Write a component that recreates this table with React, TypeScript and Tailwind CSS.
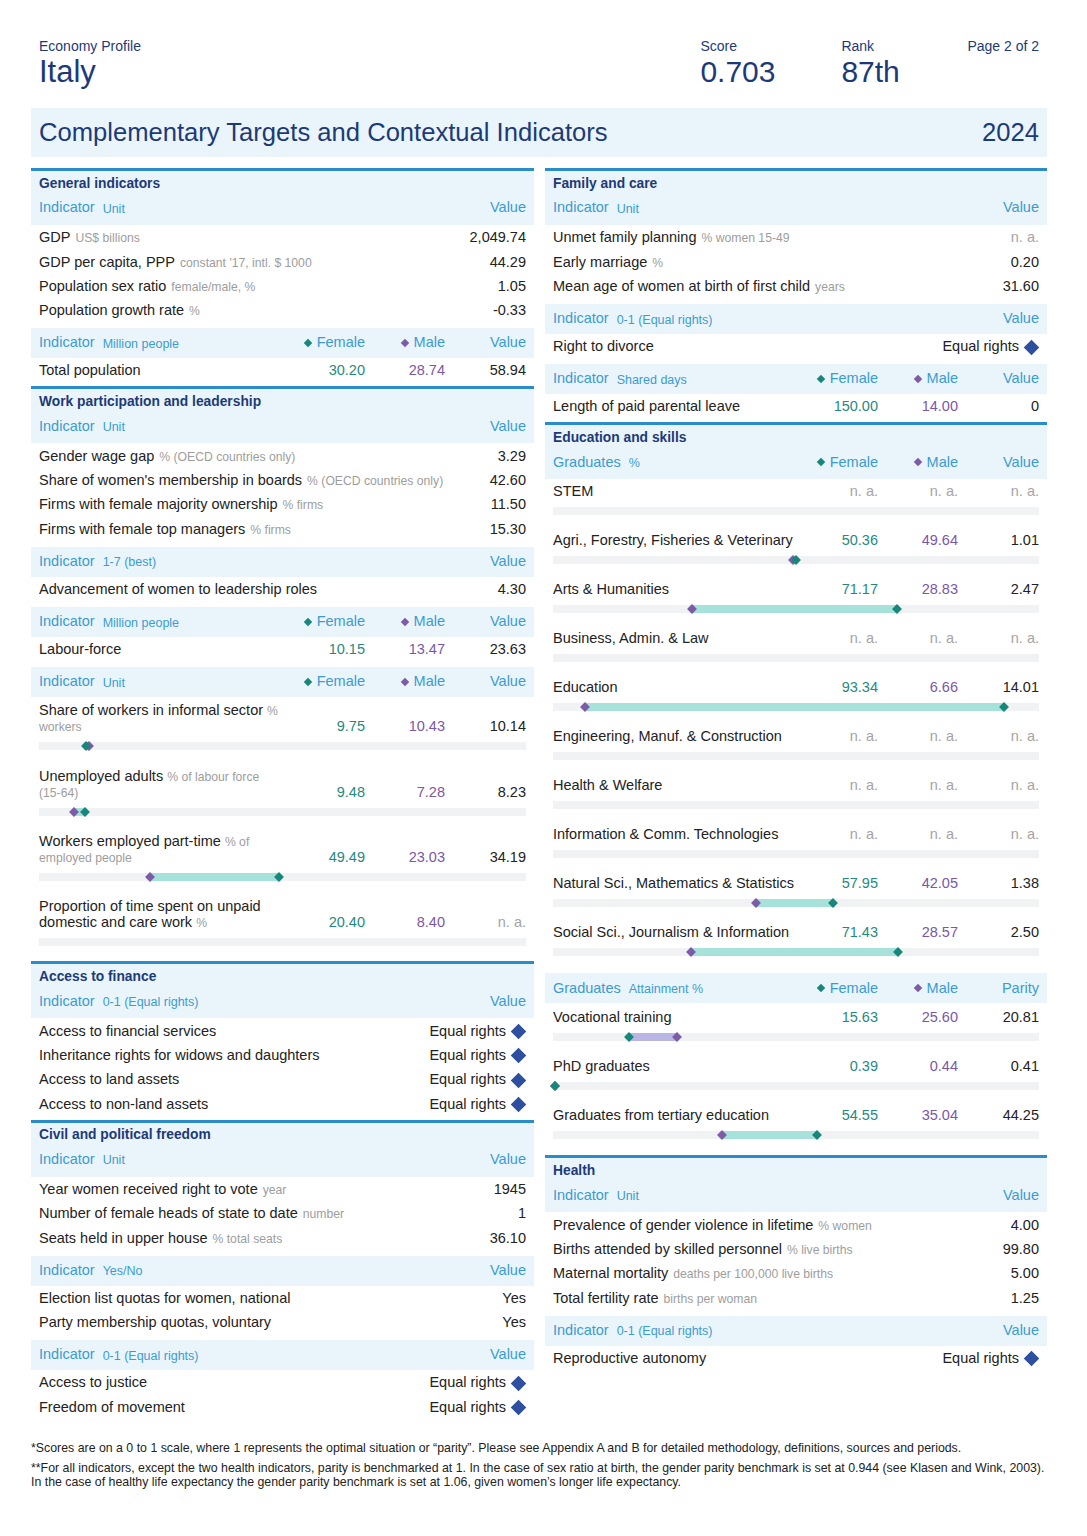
import React from 'react';

type Cols = 'v' | 'fmv';

type RowData = {
  label: string;
  unit?: string;
  value?: string;
  f?: string;
  m?: string;
  equal?: boolean;
};

type BarData = {
  label: React.ReactNode;
  f?: number;
  m?: number;
  fs?: string;
  ms?: string;
  vs?: string;
};

function HeadRow({ label = 'Indicator', unit, cols, last = 'Value' }: { label?: string; unit: string; cols: Cols; last?: string }) {
  return (
    <div className="flex h-[26px] items-center px-2 text-[14.5px] text-[#3b9bd3]">
      <span>{label}</span>
      <span className="ml-[8px] mt-[2px] text-[12.5px]">{unit}</span>
      <span className="flex-1" />
      {cols === 'fmv' && (
        <>
          <span className="flex w-[80px] items-center justify-end">
            <i className="mr-[6px] inline-block h-[6px] w-[6px] rotate-45 bg-[#17877b]" />
            Female
          </span>
          <span className="flex w-[80px] items-center justify-end">
            <i className="mr-[6px] inline-block h-[6px] w-[6px] rotate-45 bg-[#7d5ba6]" />
            Male
          </span>
        </>
      )}
      <span className="w-[81px] text-right">{last}</span>
    </div>
  );
}

function SubHead(props: { label?: string; unit: string; cols: Cols; last?: string }) {
  return (
    <div className="mt-[2px] bg-[#eaf5fb] py-[2px]">
      <HeadRow {...props} />
    </div>
  );
}

function Section({ title, unit, cols, label, children }: { title: string; unit: string; cols: Cols; label?: string; children: React.ReactNode }) {
  return (
    <div className="border-t-[3px] border-[#2b8ccb]">
      <div className="bg-[#eaf5fb] pb-[4px] pt-[2px]">
        <div className="flex h-[22px] items-center px-2 text-[13.8px] font-bold text-[#1d3a78]">{title}</div>
        <HeadRow label={label} unit={unit} cols={cols} />
      </div>
      {children}
    </div>
  );
}

function EqualRights() {
  return (
    <span className="flex items-center justify-end">
      Equal rights
      <i className="ml-[7px] mr-[2px] inline-block h-[11px] w-[11px] rotate-45 bg-[#2d4f9f]" />
    </span>
  );
}

function Val({ s, className }: { s?: string; className: string }) {
  if (s === 'n. a.') return <span className="text-[#a5a5a5]">n. a.</span>;
  return <span className={className}>{s}</span>;
}

function Rows({ rows }: { rows: RowData[] }) {
  return (
    <div className="pb-[3px] pt-[1px]">
      {rows.map((r) => (
        <div key={r.label} className="flex h-[24.3px] items-center px-2 text-[14.5px] text-[#222]">
          <span className="flex-1 truncate">
            {r.label}
            {r.unit && <span className="ml-[5px] text-[12.2px] leading-none text-[#9d9d9d]">{r.unit}</span>}
          </span>
          {r.f !== undefined && (
            <>
              <span className="w-[80px] text-right"><Val s={r.f} className="text-[#1f8a7f]" /></span>
              <span className="w-[80px] text-right"><Val s={r.m} className="text-[#7b57a8]" /></span>
            </>
          )}
          <span className={r.equal ? 'w-[150px] text-right' : 'w-[81px] text-right'}>
            {r.equal ? <EqualRights /> : <Val s={r.value} className="text-[#222]" />}
          </span>
        </div>
      ))}
    </div>
  );
}

function Bar({ f, m }: { f?: number; m?: number }) {
  const has = f !== undefined && m !== undefined;
  const k = 0.994;
  return (
    <div className="relative mt-[8px] h-[8px] bg-[#f1f2f4]">
      {has && (
        <>
          <div
            className={f! >= m! ? 'absolute top-0 h-full bg-[#a7e2da]' : 'absolute top-0 h-full bg-[#b9b6e3]'}
            style={{ left: `${Math.min(f!, m!) * k}%`, width: `${Math.abs(f! - m!) * k}%` }}
          />
          <i
            className="absolute top-1/2 h-[7px] w-[7px] -translate-x-1/2 -translate-y-1/2 rotate-45 bg-[#7d5ba6]"
            style={{ left: `${m! * k}%` }}
          />
          <i
            className="absolute top-1/2 h-[7px] w-[7px] -translate-x-1/2 -translate-y-1/2 rotate-45 bg-[#17877b]"
            style={{ left: `${f! * k}%` }}
          />
        </>
      )}
    </div>
  );
}

function BarItems({ items, wrap, item }: { items: BarData[]; wrap: string; item: string }) {
  return (
    <div className={wrap}>
      {items.map((it, i) => (
        <div key={i} className={item}>
          <div className="flex items-end text-[14.5px] leading-[16px] text-[#222]">
            <span className="flex-1">{it.label}</span>
            <span className="w-[80px] text-right"><Val s={it.fs ?? 'n. a.'} className="text-[#1f8a7f]" /></span>
            <span className="w-[80px] text-right"><Val s={it.ms ?? 'n. a.'} className="text-[#7b57a8]" /></span>
            <span className="w-[81px] text-right"><Val s={it.vs ?? 'n. a.'} className="text-[#222]" /></span>
          </div>
          <Bar f={it.f} m={it.m} />
        </div>
      ))}
    </div>
  );
}

const U = ({ children }: { children: React.ReactNode }) => (
  <span className="text-[12.2px] leading-none text-[#9d9d9d]">{children}</span>
);

const eq = (label: string): RowData => ({ label, equal: true });

const eduItems: BarData[] = [
  { label: 'STEM' },
  { label: 'Agri., Forestry, Fisheries & Veterinary', f: 50.36, m: 49.64, fs: '50.36', ms: '49.64', vs: '1.01' },
  { label: 'Arts & Humanities', f: 71.17, m: 28.83, fs: '71.17', ms: '28.83', vs: '2.47' },
  { label: 'Business, Admin. & Law' },
  { label: 'Education', f: 93.34, m: 6.66, fs: '93.34', ms: '6.66', vs: '14.01' },
  { label: 'Engineering, Manuf. & Construction' },
  { label: 'Health & Welfare' },
  { label: 'Information & Comm. Technologies' },
  { label: 'Natural Sci., Mathematics & Statistics', f: 57.95, m: 42.05, fs: '57.95', ms: '42.05', vs: '1.38' },
  { label: 'Social Sci., Journalism & Information', f: 71.43, m: 28.57, fs: '71.43', ms: '28.57', vs: '2.50' },
];

const attainItems: BarData[] = [
  { label: 'Vocational training', f: 15.63, m: 25.6, fs: '15.63', ms: '25.60', vs: '20.81' },
  { label: 'PhD graduates', f: 0.39, m: 0.44, fs: '0.39', ms: '0.44', vs: '0.41' },
  { label: 'Graduates from tertiary education', f: 54.55, m: 35.04, fs: '54.55', ms: '35.04', vs: '44.25' },
];

const workBars: BarData[] = [
  {
    label: (<>Share of workers in informal sector <U>%</U><br /><U>workers</U></>),
    f: 9.75, m: 10.43, fs: '9.75', ms: '10.43', vs: '10.14',
  },
  {
    label: (<>Unemployed adults <U>% of labour force</U><br /><U>(15-64)</U></>),
    f: 9.48, m: 7.28, fs: '9.48', ms: '7.28', vs: '8.23',
  },
  {
    label: (<>Workers employed part-time <U>% of</U><br /><U>employed people</U></>),
    f: 49.49, m: 23.03, fs: '49.49', ms: '23.03', vs: '34.19',
  },
  {
    label: (<>Proportion of time spent on unpaid<br />domestic and care work <U>%</U></>),
    fs: '20.40', ms: '8.40', vs: 'n. a.',
  },
];

export default function App() {
  return (
    <div className="h-[1536px] w-[1087px] bg-white pl-[31px] pr-[40px] pt-[38px] font-['Liberation_Sans',Arial,sans-serif]">
      {/* header */}
      <div className="flex px-2 text-[#1d3a78]">
        <div>
          <div className="text-[14px] leading-[16px]">Economy Profile</div>
          <div className="mt-[1px] text-[31px] leading-[34px]">Italy</div>
        </div>
        <div className="ml-auto flex">
          <div className="w-[141px]">
            <div className="text-[14px] leading-[16px]">Score</div>
            <div className="mt-[1px] text-[30px] leading-[34px]">0.703</div>
          </div>
          <div className="w-[126px]">
            <div className="text-[14px] leading-[16px]">Rank</div>
            <div className="mt-[1px] text-[30px] leading-[34px]">87th</div>
          </div>
          <div className="whitespace-nowrap text-[14px] leading-[16px]">Page 2 of 2</div>
        </div>
      </div>

      <div className="mt-[19px] flex h-[49px] items-center justify-between bg-[#eaf5fb] px-2 text-[25.6px] text-[#1d3a78]">
        <span>Complementary Targets and Contextual Indicators</span>
        <span>2024</span>
      </div>

      <div className="mt-[11px] grid grid-cols-[503px_502px] gap-x-[11px]">
        {/* left column */}
        <div>
          <Section title="General indicators" unit="Unit" cols="v">
            <Rows
              rows={[
                { label: 'GDP', unit: 'US$ billions', value: '2,049.74' },
                { label: 'GDP per capita, PPP', unit: "constant '17, intl. $ 1000", value: '44.29' },
                { label: 'Population sex ratio', unit: 'female/male, %', value: '1.05' },
                { label: 'Population growth rate', unit: '%', value: '-0.33' },
              ]}
            />
            <SubHead unit="Million people" cols="fmv" />
            <Rows rows={[{ label: 'Total population', f: '30.20', m: '28.74', value: '58.94' }]} />
          </Section>

          <Section title="Work participation and leadership" unit="Unit" cols="v">
            <Rows
              rows={[
                { label: 'Gender wage gap', unit: '% (OECD countries only)', value: '3.29' },
                { label: "Share of women's membership in boards", unit: '% (OECD countries only)', value: '42.60' },
                { label: 'Firms with female majority ownership', unit: '% firms', value: '11.50' },
                { label: 'Firms with female top managers', unit: '% firms', value: '15.30' },
              ]}
            />
            <SubHead unit="1-7 (best)" cols="v" />
            <Rows rows={[{ label: 'Advancement of women to leadership roles', value: '4.30' }]} />
            <SubHead unit="Million people" cols="fmv" />
            <Rows rows={[{ label: 'Labour-force', f: '10.15', m: '13.47', value: '23.63' }]} />
            <SubHead unit="Unit" cols="fmv" />
            <BarItems items={workBars} wrap="pb-[3px]" item="px-2 pb-[12.3px] pt-[5px]" />
          </Section>

          <Section title="Access to finance" unit="0-1 (Equal rights)" cols="v">
            <Rows
              rows={[
                eq('Access to financial services'),
                eq('Inheritance rights for widows and daughters'),
                eq('Access to land assets'),
                eq('Access to non-land assets'),
              ]}
            />
          </Section>

          <Section title="Civil and political freedom" unit="Unit" cols="v">
            <Rows
              rows={[
                { label: 'Year women received right to vote', unit: 'year', value: '1945' },
                { label: 'Number of female heads of state to date', unit: 'number', value: '1' },
                { label: 'Seats held in upper house', unit: '% total seats', value: '36.10' },
              ]}
            />
            <SubHead unit="Yes/No" cols="v" />
            <Rows
              rows={[
                { label: 'Election list quotas for women, national', value: 'Yes' },
                { label: 'Party membership quotas, voluntary', value: 'Yes' },
              ]}
            />
            <SubHead unit="0-1 (Equal rights)" cols="v" />
            <Rows rows={[eq('Access to justice'), eq('Freedom of movement')]} />
          </Section>
        </div>

        {/* right column */}
        <div>
          <Section title="Family and care" unit="Unit" cols="v">
            <Rows
              rows={[
                { label: 'Unmet family planning', unit: '% women 15-49', value: 'n. a.' },
                { label: 'Early marriage', unit: '%', value: '0.20' },
                { label: 'Mean age of women at birth of first child', unit: 'years', value: '31.60' },
              ]}
            />
            <SubHead unit="0-1 (Equal rights)" cols="v" />
            <Rows rows={[eq('Right to divorce')]} />
            <SubHead unit="Shared days" cols="fmv" />
            <Rows rows={[{ label: 'Length of paid parental leave', f: '150.00', m: '14.00', value: '0' }]} />
          </Section>

          <Section title="Education and skills" label="Graduates" unit="%" cols="fmv">
            <BarItems items={eduItems} wrap="pb-[2px]" item="px-2 pb-[13.5px] pt-[3.5px]" />
            <SubHead label="Graduates" unit="Attainment %" cols="fmv" last="Parity" />
            <BarItems items={attainItems} wrap="pb-[5px]" item="px-2 pb-[11.5px] pt-[5.5px]" />
          </Section>

          <Section title="Health" unit="Unit" cols="v">
            <Rows
              rows={[
                { label: 'Prevalence of gender violence in lifetime', unit: '% women', value: '4.00' },
                { label: 'Births attended by skilled personnel', unit: '% live births', value: '99.80' },
                { label: 'Maternal mortality', unit: 'deaths per 100,000 live births', value: '5.00' },
                { label: 'Total fertility rate', unit: 'births per woman', value: '1.25' },
              ]}
            />
            <SubHead unit="0-1 (Equal rights)" cols="v" />
            <Rows rows={[eq('Reproductive autonomy')]} />
          </Section>
        </div>
      </div>

      {/* footnotes */}
      <div className="mt-[18px] text-[12.35px] leading-[14px] text-[#222]">
        <p>
          *Scores are on a 0 to 1 scale, where 1 represents the optimal situation or “parity”. Please see Appendix A and B for
          detailed methodology, definitions, sources and periods.
        </p>
        <p className="mt-[6px]">
          **For all indicators, except the two health indicators, parity is benchmarked at 1. In the case of sex ratio at birth, the
          gender parity benchmark is set at 0.944 (see Klasen and Wink, 2003).
          <br />
          In the case of healthy life expectancy the gender parity benchmark is set at 1.06, given women’s longer life expectancy.
        </p>
      </div>
    </div>
  );
}
